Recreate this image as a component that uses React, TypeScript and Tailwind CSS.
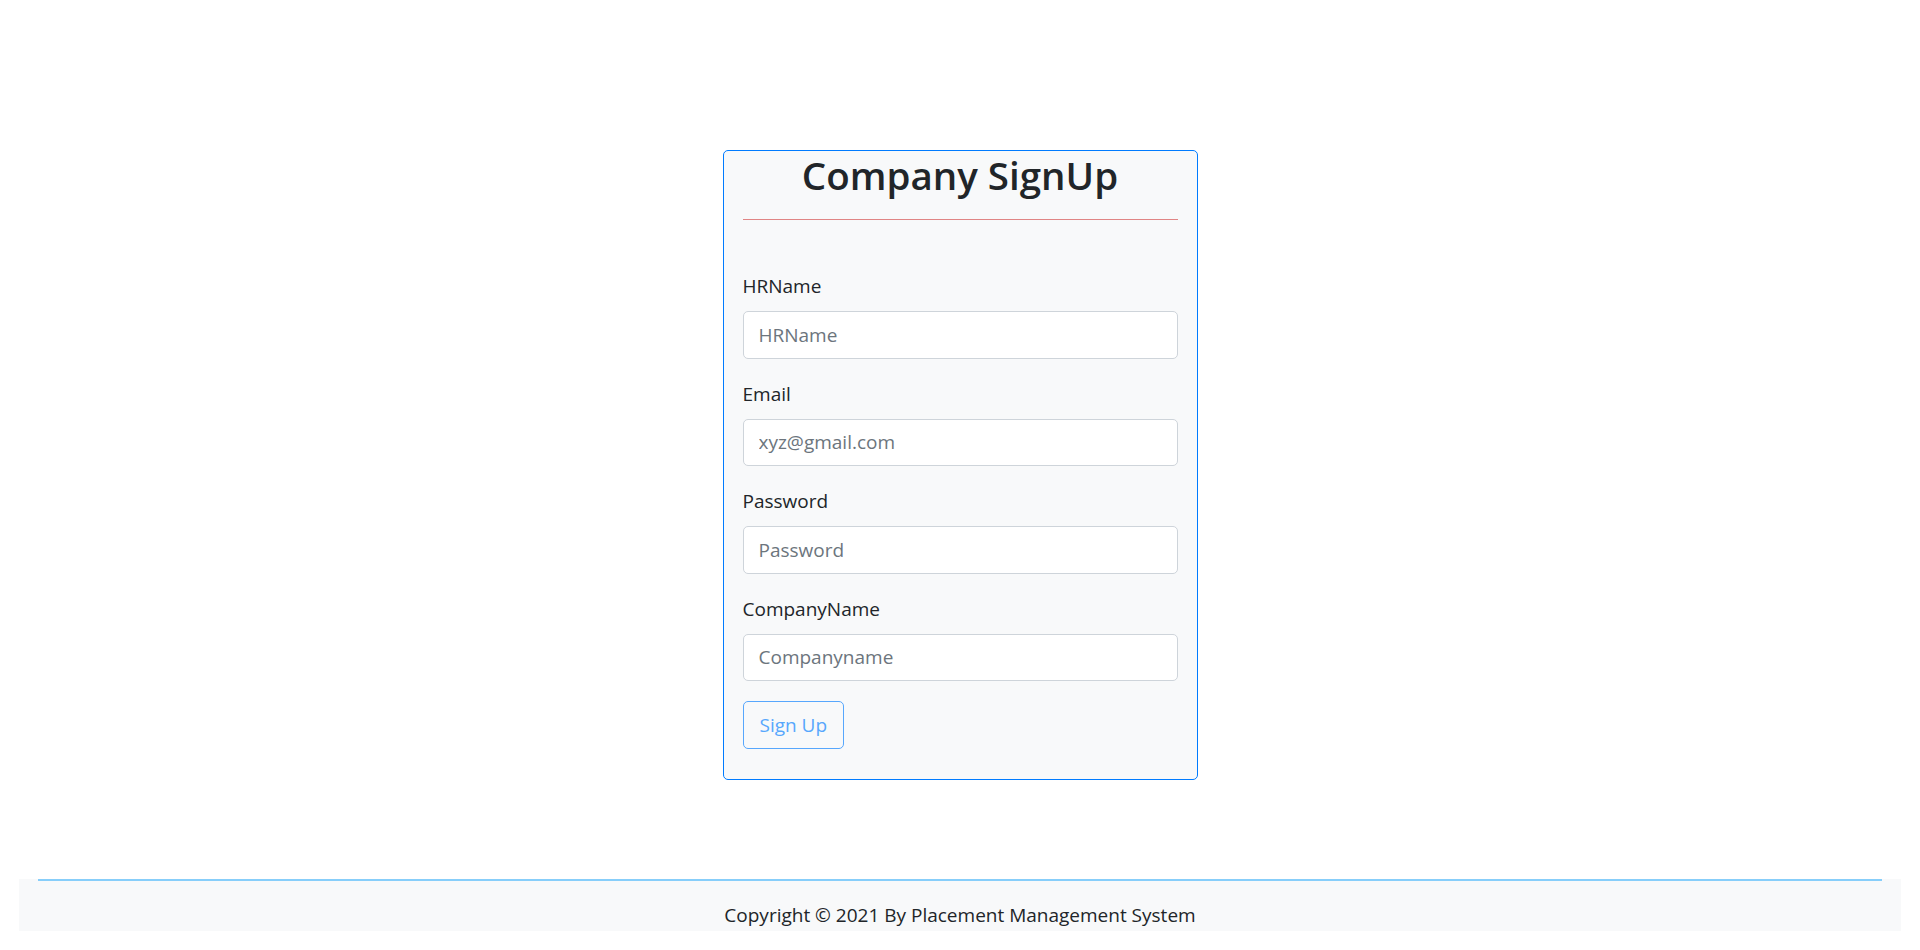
const fields = [
  { label: "HRName", placeholder: "HRName", type: "text" },
  { label: "Email", placeholder: "xyz@gmail.com", type: "email" },
  { label: "Password", placeholder: "Password", type: "password" },
  { label: "CompanyName", placeholder: "Companyname", type: "text" },
];

const App = () => {
  return (
    <div className="min-h-[950px] bg-white font-['Open_Sans',sans-serif] text-[#212529]">
      {/* Signup card */}
      <div className="pt-[150px]">
        <div className="mx-auto w-[475px] rounded-[5px] border border-[#007bff] bg-[#f8f9fa] px-[19px] pb-[30px]">
          <h2 className="text-center text-[38.5px] font-semibold leading-[48px]">
            Company SignUp
          </h2>
          <hr className="mt-[20px] border-0 border-t border-[#e08585]" />

          <form className="mt-[51px]" onSubmit={(e) => e.preventDefault()}>
            {fields.map((field) => (
              <div key={field.label} className="mb-[20px]">
                <label className="mb-[10px] block text-[19px] leading-[30px]">
                  {field.label}
                </label>
                <input
                  type={field.type}
                  placeholder={field.placeholder}
                  className="block h-[47.5px] w-full rounded-[5px] border border-[#ced4da] bg-white px-[15px] text-[19px] leading-[30px] text-[#495057] placeholder:text-[#6c757d] outline-none"
                />
              </div>
            ))}
            <button
              type="submit"
              disabled
              className="h-[47.5px] rounded-[5px] border border-[#57a7fd] px-[16px] text-[19px] leading-[30px] text-[#57a7fd]"
            >
              Sign Up
            </button>
          </form>
        </div>
      </div>

      {/* Footer */}
      <footer className="mx-[19px] mt-[99px] bg-[#f8f9fa]">
        <div className="mx-[19px] border-t-2 border-[#87cefa]"></div>
        <p className="pt-[19px] pb-[1px] text-center text-[19px] leading-[30px]">
          Copyright © 2021 By Placement Management System
        </p>
      </footer>
    </div>
  );
};

export default App;
